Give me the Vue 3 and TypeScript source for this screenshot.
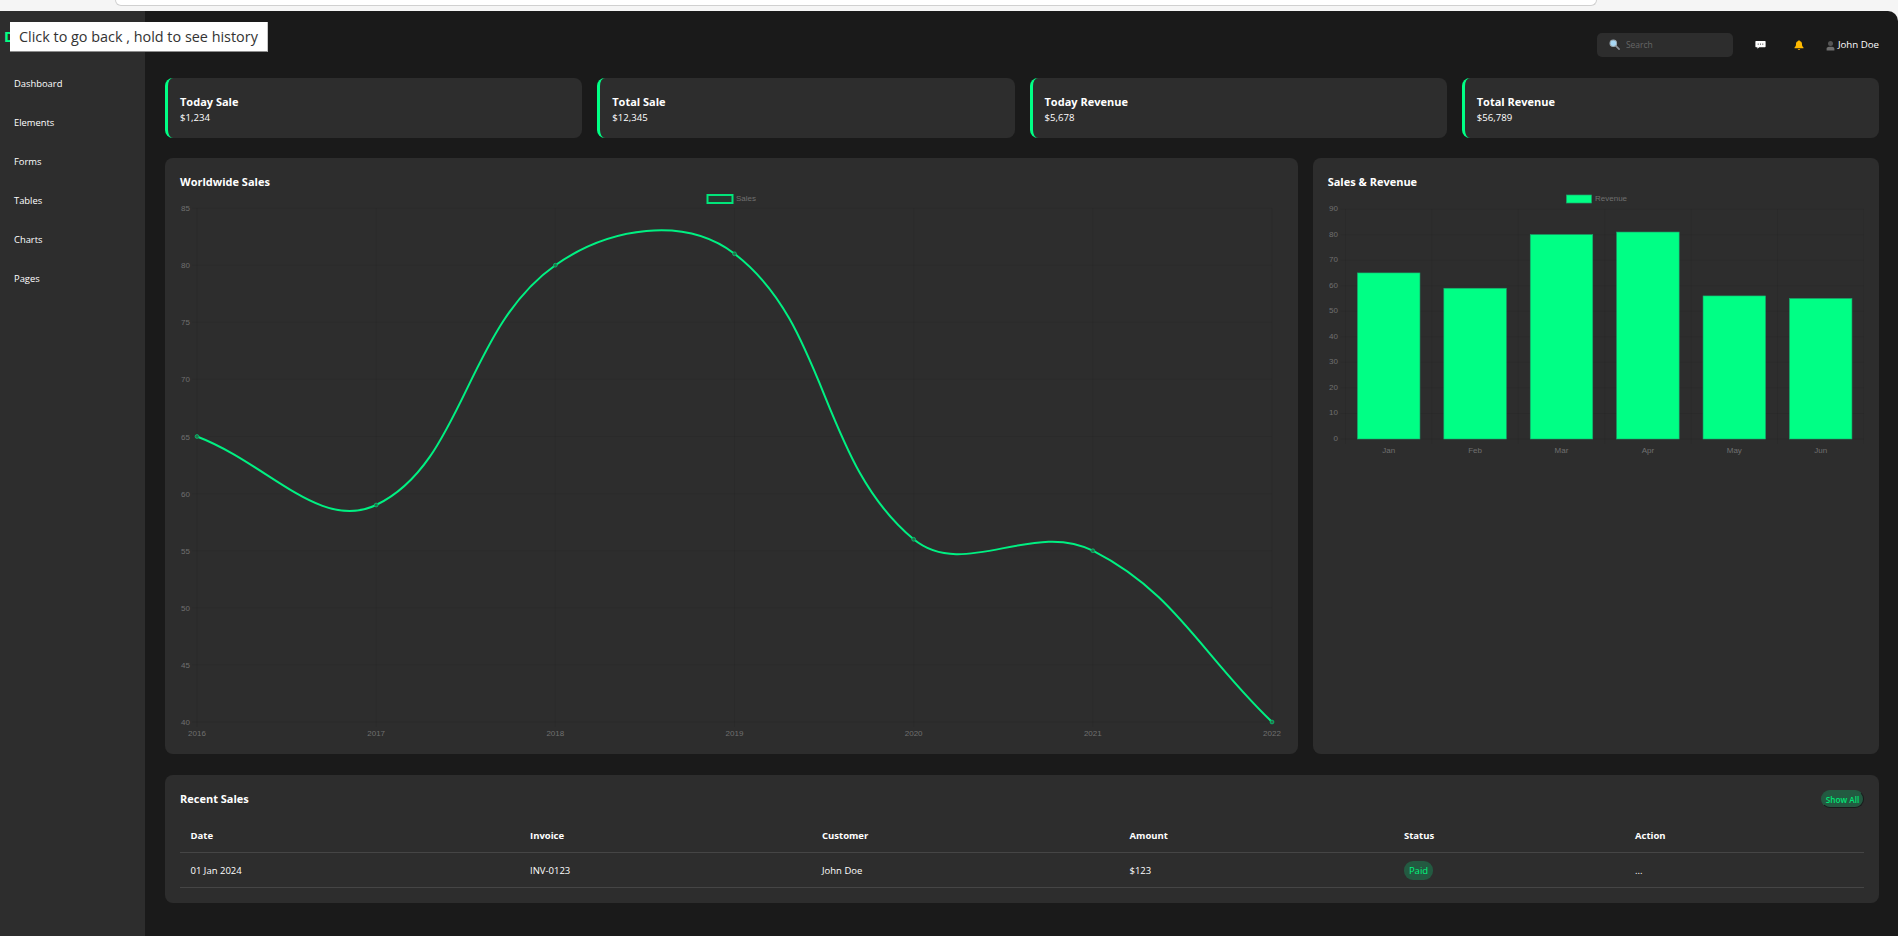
<script setup lang="ts">
interface Pt { x: number; y: number }

const navItems = ['Dashboard', 'Elements', 'Forms', 'Tables', 'Charts', 'Pages']

const stats = [
  { title: 'Today Sale', value: '$1,234' },
  { title: 'Total Sale', value: '$12,345' },
  { title: 'Today Revenue', value: '$5,678' },
  { title: 'Total Revenue', value: '$56,789' },
]

// line chart, coordinates are local to the svg
const years = ['2016', '2017', '2018', '2019', '2020', '2021', '2022']
const sales = [65, 59, 80, 81, 56, 55, 40]
const lineLeft = 17
const lineRight = 1092
const lineBottom = 532
const lineUnit = 11.42
const lineStep = (lineRight - lineLeft) / 6
const lineX = years.map((_, i) => lineLeft + i * lineStep)
const lineTicks = [85, 80, 75, 70, 65, 60, 55, 50, 45, 40].map((v) => ({
  v,
  y: lineBottom - (v - 40) * lineUnit,
}))
const linePts: Pt[] = sales.map((v, i) => ({ x: lineX[i], y: lineBottom - (v - 40) * lineUnit }))

// same spline as chart.js with tension 0.4
function splinePath(pts: Pt[], t: number): string {
  const dist = (a: Pt, b: Pt) => Math.hypot(a.x - b.x, a.y - b.y)
  let d = `M${pts[0].x} ${pts[0].y}`
  const ctrl = (i: number) => {
    const cur = pts[i]
    const prev = pts[i - 1] ?? cur
    const next = pts[i + 1] ?? cur
    const d01 = dist(prev, cur)
    const d12 = dist(cur, next)
    const sum = d01 + d12 || 1
    const fa = (t * d01) / sum
    const fb = (t * d12) / sum
    return {
      inX: cur.x - fa * (next.x - prev.x),
      inY: cur.y - fa * (next.y - prev.y),
      outX: cur.x + fb * (next.x - prev.x),
      outY: cur.y + fb * (next.y - prev.y),
    }
  }
  for (let i = 1; i < pts.length; i++) {
    const a = ctrl(i - 1)
    const b = ctrl(i)
    d += ` C${a.outX} ${a.outY} ${b.inX} ${b.inY} ${pts[i].x} ${pts[i].y}`
  }
  return d
}
const linePath = splinePath(linePts, 0.4)

// bar chart
const months = ['Jan', 'Feb', 'Mar', 'Apr', 'May', 'Jun']
const revenue = [65, 59, 80, 81, 56, 55]
const barLeft = 17.5
const barBottom = 249
const barUnit = 2.555
const barStep = 86.4
const barWidth = 62.5
const barTicks = [90, 80, 70, 60, 50, 40, 30, 20, 10, 0].map((v) => ({ v, y: barBottom - v * barUnit }))
const barGrid = [0, 1, 2, 3, 4, 5, 6].map((i) => barLeft + i * barStep)
const bars = revenue.map((v, i) => ({
  label: months[i],
  cx: barLeft + (i + 0.5) * barStep,
  x: barLeft + (i + 0.5) * barStep - barWidth / 2,
  y: barBottom - v * barUnit,
  h: v * barUnit,
}))
</script>

<template>
  <div class="page">
    <div class="browser-strip">
      <div class="url-bar"></div>
    </div>
    <div class="app">
      <div class="back-tip">Click to go back , hold to see history</div>

      <aside class="sidebar">
        <div class="logo">DarkPan</div>
        <nav class="nav">
          <a v-for="item in navItems" :key="item" class="nav-item">{{ item }}</a>
        </nav>
      </aside>

      <main class="main">
        <header class="topbar">
          <label class="search">
            <svg class="search-icon" viewBox="0 0 12 12" width="11" height="11">
              <path d="M7 7l4 4" stroke="#8a8f96" stroke-width="1.8" stroke-linecap="round" />
              <circle cx="4.7" cy="4.7" r="3.6" fill="#a9d8f5" stroke="#9aa7b0" stroke-width="1.1" />
            </svg>
            <input class="search-input" type="text" placeholder="Search" />
          </label>
          <svg class="top-icon chat" viewBox="0 0 11 10" width="11" height="10">
            <path d="M1 1h9a.6.6 0 0 1 .6.6v5a.6.6 0 0 1-.6.6H4.200L2.400 8.800V7.200H1a.6.6 0 0 1-.6-.6v-5A.6.6 0 0 1 1 1z" fill="#fff" />
            <circle cx="3.200" cy="4.100" r=".6" fill="#333" />
            <circle cx="5.500" cy="4.100" r=".6" fill="#333" />
            <circle cx="7.800" cy="4.100" r=".6" fill="#333" />
          </svg>
          <svg class="top-icon bell" viewBox="0 0 10 10" width="10" height="10">
            <path d="M5 .3c.5 0 .8.3.8.8 1.500.4 2.200 1.500 2.200 3 0 1.800.4 2.600 1.500 3.500v.6H.5v-.6C1.600 6.700 2 5.900 2 4.100c0-1.500.7-2.600 2.200-3 0-.5.3-.8.8-.8z" fill="#ffb900" />
            <path d="M3.800 9.100h2.400a1.200.9 0 0 1-2.400 0z" fill="#e89f00" />
          </svg>
          <div class="user">
            <svg viewBox="0 0 9 11" width="9" height="11">
              <circle cx="4.500" cy="3.400" r="2.500" fill="#555" />
              <path d="M.6 10.600V8.700c0-1.300 1.300-1.900 3.900-1.900s3.900.6 3.900 1.900v1.900z" fill="#6e6e6e" />
            </svg>
            <span class="user-name">John Doe</span>
          </div>
        </header>

        <section class="stats">
          <div v-for="s in stats" :key="s.title" class="stat">
            <div class="stat-title">{{ s.title }}</div>
            <div class="stat-value">{{ s.value }}</div>
          </div>
        </section>

        <section class="charts">
          <div class="panel">
            <h6 class="panel-title">Worldwide Sales</h6>
            <svg class="chart" width="1102" height="550" viewBox="0 0 1102 550">
              <line v-for="t in lineTicks" :key="t.v" class="grid" :x1="lineLeft - 5" :x2="lineRight" :y1="t.y" :y2="t.y" />
              <line v-for="x in lineX" :key="x" class="grid" :x1="x" :x2="x" y1="18" :y2="lineBottom + 5" />
              <text v-for="t in lineTicks" :key="'y' + t.v" class="tick" x="10" :y="t.y + 3" text-anchor="end">{{ t.v }}</text>
              <text v-for="(y, i) in years" :key="y" class="tick" :x="lineX[i]" :y="lineBottom + 14" text-anchor="middle">{{ y }}</text>
              <rect x="527.500" y="5" width="25" height="8" fill="#263a31" stroke="#00e67a" stroke-width="2" />
              <text class="tick" x="556" y="11">Sales</text>
              <path :d="linePath" fill="none" stroke="#00f082" stroke-width="2" />
              <circle v-for="p in linePts" :key="p.x" :cx="p.x" :cy="p.y" r="1.900" fill="#2a6b4c" stroke="#00c96e" stroke-width=".8" />
            </svg>
          </div>

          <div class="panel">
            <h6 class="panel-title">Sales &amp; Revenue</h6>
            <svg class="chart" width="536" height="270" viewBox="0 0 536 270">
              <line v-for="t in barTicks" :key="t.v" class="grid" :x1="barLeft - 5" x2="536" :y1="t.y" :y2="t.y" />
              <line v-for="x in barGrid" :key="x" class="grid" :x1="x" :x2="x" y1="19" :y2="barBottom + 5" />
              <text v-for="t in barTicks" :key="'y' + t.v" class="tick" x="10" :y="t.y + 2" text-anchor="end">{{ t.v }}</text>
              <rect x="238.500" y="5" width="25" height="8" fill="#00ff85" stroke="#1aa56c" stroke-width=".7" />
              <text class="tick" x="267" y="11">Revenue</text>
              <g v-for="b in bars" :key="b.label">
                <rect :x="b.x" :y="b.y" :width="barWidth" :height="b.h" fill="#00ff85" stroke="#1aa56c" stroke-width=".6" />
                <text class="tick" :x="b.cx" :y="barBottom + 14" text-anchor="middle">{{ b.label }}</text>
              </g>
            </svg>
          </div>
        </section>

        <section class="panel recent">
          <div class="recent-head">
            <h6 class="panel-title">Recent Sales</h6>
            <button class="show-all" type="button">Show All</button>
          </div>
          <table class="table">
            <colgroup>
              <col style="width: 339.5px" />
              <col style="width: 292px" />
              <col style="width: 307.5px" />
              <col style="width: 274.5px" />
              <col style="width: 231px" />
              <col />
            </colgroup>
            <thead>
              <tr>
                <th>Date</th>
                <th>Invoice</th>
                <th>Customer</th>
                <th>Amount</th>
                <th>Status</th>
                <th>Action</th>
              </tr>
            </thead>
            <tbody>
              <tr>
                <td>01 Jan 2024</td>
                <td>INV-0123</td>
                <td>John Doe</td>
                <td>$123</td>
                <td><span class="paid">Paid</span></td>
                <td>...</td>
              </tr>
            </tbody>
          </table>
        </section>
      </main>
    </div>
  </div>
</template>

<style>
html,
body {
  margin: 0;
  background: #f5f5f5;
}
</style>

<style scoped>
.page {
  display: flex;
  flex-direction: column;
  height: 936px;
  overflow: hidden;
  font-family: "Open Sans", "Liberation Sans", sans-serif;
  color: #fff;
}

.browser-strip {
  height: 11px;
  flex: none;
  padding: 0 301px 0 115px;
  background: #f5f5f5;
  overflow: hidden;
}

.url-bar {
  height: 5px;
  background: #fff;
  border: 1px solid #d0d0d0;
  border-top: 0;
  border-radius: 0 0 12px 12px;
}

.app {
  position: relative;
  display: flex;
  flex: 1;
  min-height: 0;
  background: #1a1a1a;
  border-top-right-radius: 10px;
  overflow: hidden;
}

.back-tip {
  position: absolute;
  left: 10px;
  top: 11px;
  z-index: 10;
  width: 258px;
  height: 30px;
  box-sizing: border-box;
  padding-left: 9px;
  background: #fff;
  border-bottom: 1px solid #8d8d8d;
  border-right: 1px solid #c8c8c8;
  color: #333;
  font-size: 14.400px;
  line-height: 30px;
  white-space: nowrap;
}

.sidebar {
  width: 145px;
  flex: none;
  background: #2d2d2d;
}

.logo {
  height: 61px;
  padding-left: 4px;
  color: #00ff85;
  font-size: 15px;
  font-weight: 700;
  line-height: 51px;
}

.nav {
  display: flex;
  flex-direction: column;
}

.nav-item {
  height: 39px;
  padding-left: 14px;
  font-size: 9.400px;
  font-weight: 500;
  line-height: 24px;
}

.main {
  flex: 1;
  min-width: 0;
  padding: 0 19px 0 20px;
}

.topbar {
  display: flex;
  align-items: center;
  justify-content: flex-end;
  height: 67px;
  box-sizing: border-box;
}

.search {
  display: flex;
  align-items: center;
  width: 136px;
  height: 24px;
  box-sizing: border-box;
  padding-left: 12px;
  margin-right: 22px;
  background: #2d2d2d;
  border-radius: 5px;
}

.search-icon {
  flex: none;
  margin-right: 6px;
}

.search-input {
  width: 90px;
  padding: 0;
  border: 0;
  outline: 0;
  background: transparent;
  color: #666;
  font-family: inherit;
  font-size: 8.500px;
}

.search-input::placeholder {
  color: #666;
  opacity: 1;
}

.top-icon.chat {
  margin-right: 28px;
}

.top-icon.bell {
  margin-right: 22px;
}

.user {
  display: flex;
  align-items: center;
  gap: 3px;
  padding-top: 1px;
}

.user-name {
  font-size: 9.700px;
  font-weight: 500;
  line-height: 14px;
}

.stats {
  display: grid;
  grid-template-columns: repeat(4, 1fr);
  gap: 15px;
}

.stat {
  height: 60px;
  box-sizing: border-box;
  padding: 15px 15px 0 12px;
  background: #2d2d2d;
  border-left: 3px solid #00ff85;
  border-radius: 8px;
}

.stat-title {
  font-size: 11px;
  font-weight: 700;
  line-height: 18px;
}

.stat-value {
  font-size: 9.600px;
  font-weight: 500;
  line-height: 13px;
}

.charts {
  display: grid;
  grid-template-columns: 2fr 1fr;
  gap: 15px;
  margin-top: 20px;
}

.panel {
  box-sizing: border-box;
  padding: 15px;
  background: #2d2d2d;
  border-radius: 8px;
}

.charts .panel {
  height: 596px;
}

.panel-title {
  margin: 0;
  font-size: 11px;
  font-weight: 700;
  line-height: 17px;
}

.chart {
  display: block;
}

.grid {
  stroke: rgba(0, 0, 0, 0.05);
  stroke-width: 1;
}

.tick {
  fill: #707070;
  font-family: "Liberation Sans", Arial, sans-serif;
  font-size: 8px;
}

.recent {
  height: 128px;
  margin-top: 21px;
}

.recent-head {
  display: flex;
  align-items: center;
  justify-content: space-between;
  height: 18px;
  margin-bottom: 10px;
}

.recent-head .panel-title {
  margin-top: -2px;
}

.show-all {
  width: 43px;
  height: 18px;
  padding: 0;
  background: #235a41;
  border: 1px solid #17191a;
  border-top-color: #235a41;
  border-left-color: #235a41;
  border-radius: 9px;
  color: #00e676;
  font-family: inherit;
  font-size: 8.200px;
  font-weight: 600;
}

.table {
  width: 100%;
  border-collapse: collapse;
  table-layout: fixed;
  font-size: 9.500px;
}

.table th {
  height: 34px;
  box-sizing: border-box;
  padding: 2px 10.500px 0;
  border-bottom: 1px solid #454545;
  font-weight: 700;
  text-align: left;
}

.table td {
  height: 35px;
  box-sizing: border-box;
  padding: 2px 10.500px 0;
  border-bottom: 1px solid #454545;
  font-weight: 500;
}

.paid {
  display: inline-block;
  width: 29px;
  height: 19px;
  background: #235a41;
  border-radius: 9px;
  color: #00f57f;
  line-height: 19px;
  text-align: center;
}
</style>
